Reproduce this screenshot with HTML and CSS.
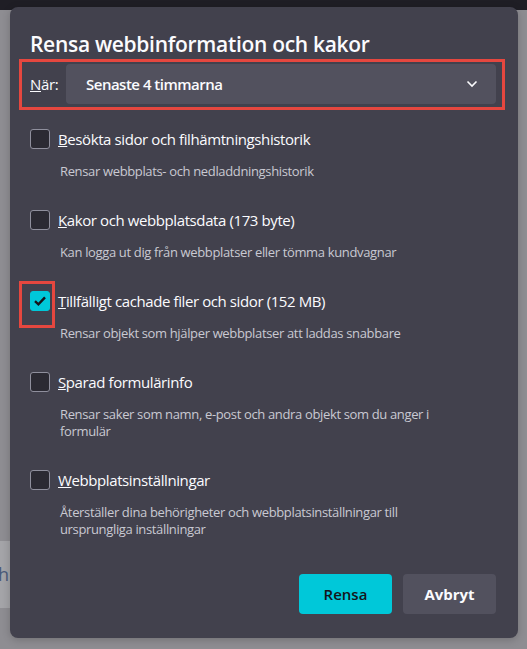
FILE: index.html
```html
<!DOCTYPE html>
<html lang="sv">

<head>
    <meta charset="UTF-8">
    <meta name="viewport" content="width=device-width, initial-scale=1.0">
    <title>Rensa webbinformation och kakor</title>
    <link rel="stylesheet" href="styles.css">
</head>

<body>

    <div class="topbar"></div>
    <div class="page-field"><span>h</span></div>

    <div class="dialog">
        <h2>Rensa webbinformation och kakor</h2>

        <div class="when-row mark">
            <label for="when"><u>N</u>är:</label>
            <div class="select" id="when">
                <span>Senaste 4 timmarna</span>
                <svg width="12" height="8" viewBox="0 0 12 8">
                    <path d="M1.5 1.5 L6 6 L10.5 1.5" fill="none" stroke="#fbfbfe" stroke-width="1.6" />
                </svg>
            </div>
        </div>

        <div class="options">
            <div class="option">
                <div class="option-head">
                    <span class="check"></span>
                    <span class="label"><u>B</u>esökta sidor och filhämtningshistorik</span>
                </div>
                <p class="desc">Rensar webbplats- och nedladdningshistorik</p>
            </div>

            <div class="option">
                <div class="option-head">
                    <span class="check"></span>
                    <span class="label"><u>K</u>akor och webbplatsdata (173 byte)</span>
                </div>
                <p class="desc">Kan logga ut dig från webbplatser eller tömma kundvagnar</p>
            </div>

            <div class="option">
                <div class="option-head">
                    <span class="check-wrap mark">
                        <span class="check checked">
                            <svg width="14" height="12" viewBox="0 0 14 12">
                                <path d="M2 6.2 L5.4 9.4 L12 2.4" fill="none" stroke="#15141a" stroke-width="2.4" />
                            </svg>
                        </span>
                    </span>
                    <span class="label"><u>T</u>illfälligt cachade filer och sidor (152 MB)</span>
                </div>
                <p class="desc">Rensar objekt som hjälper webbplatser att laddas snabbare</p>
            </div>

            <div class="option">
                <div class="option-head">
                    <span class="check"></span>
                    <span class="label"><u>S</u>parad formulärinfo</span>
                </div>
                <p class="desc">Rensar saker som namn, e-post och andra objekt som du anger i formulär</p>
            </div>

            <div class="option">
                <div class="option-head">
                    <span class="check"></span>
                    <span class="label"><u>W</u>ebbplatsinställningar</span>
                </div>
                <p class="desc">Återställer dina behörigheter och webbplatsinställningar till ursprungliga inställningar</p>
            </div>
        </div>

        <div class="buttons">
            <button class="btn primary">Rensa</button>
            <button class="btn">Avbryt</button>
        </div>
    </div>

</body>

</html>
```

FILE: styles.css
```css
body {
    font-family: "Open Sans", "Noto Sans", sans-serif;
    background-color: #8e8d92;
    margin: 0;
    padding: 0;
    height: 649px;
    overflow: hidden;
    position: relative;
}

.topbar {
    height: 10px;
    background-color: #1f1e25;
}

.page-field {
    margin-top: 531px;
    width: 40px;
    height: 67px;
    background-color: #a4a4a8;
    color: #4a5a7a;
    font-size: 18px;
    line-height: 67px;
}

.page-field span {
    margin-left: -2px;
}

.dialog {
    position: absolute;
    left: 10px;
    top: 7px;
    width: 508px;
    height: 631px;
    box-sizing: border-box;
    background-color: #42414d;
    border-radius: 8px;
    padding: 24px 22px 0 20px;
    color: #fbfbfe;
    box-shadow: 0 2px 8px rgba(0, 0, 0, 0.2);
}

h2 {
    font-size: 21px;
    font-weight: 600;
    letter-spacing: -0.3px;
    margin: 0;
    line-height: 27px;
}

.mark {
    border: 3px solid #e5473f;
}

.when-row {
    display: flex;
    align-items: center;
    margin: 1px 0 0 -11px;
    padding: 2px 6px 3px 8px;
    width: 486px;
    box-sizing: border-box;
    height: 51px;
}

.when-row label {
    font-size: 15px;
    letter-spacing: -0.3px;
    width: 36px;
    flex-shrink: 0;
}

.select {
    flex: 1;
    height: 40px;
    background-color: #52515e;
    border-radius: 4px;
    display: flex;
    align-items: center;
    justify-content: space-between;
    padding: 0 18px 0 20px;
    font-size: 15px;
    font-weight: 600;
    letter-spacing: -0.5px;
}

.options {
    display: flex;
    flex-direction: column;
    gap: 30px;
    margin-top: 19px;
}

.option-head {
    display: flex;
    align-items: center;
    gap: 8px;
    height: 20px;
}

.check {
    width: 20px;
    height: 20px;
    box-sizing: border-box;
    border: 1px solid #8f8f9d;
    border-radius: 3px;
    background-color: #2b2a33;
    display: flex;
    align-items: center;
    justify-content: center;
    flex-shrink: 0;
}

.check.checked {
    background-color: #00c8d9;
    border-color: #00c8d9;
}

.check-wrap {
    margin: -10px -5px -17px -11px;
    padding: 7px 2px 14px 8px;
}

.label {
    font-size: 15px;
    letter-spacing: -0.4px;
}

.desc {
    margin: 14px 0 0 30px;
    font-size: 13px;
    letter-spacing: -0.35px;
    line-height: 17px;
    color: #c9c9d2;
    max-width: 395px;
}

.buttons {
    display: flex;
    justify-content: flex-end;
    gap: 11px;
    margin-top: 36px;
}

.btn {
    width: 93px;
    height: 40px;
    border: none;
    border-radius: 4px;
    font-family: inherit;
    font-size: 15px;
    font-weight: 700;
    background-color: #52515e;
    color: #fbfbfe;
}

.btn.primary {
    background-color: #00c8d9;
    color: #15141a;
    font-weight: 600;
}
```
